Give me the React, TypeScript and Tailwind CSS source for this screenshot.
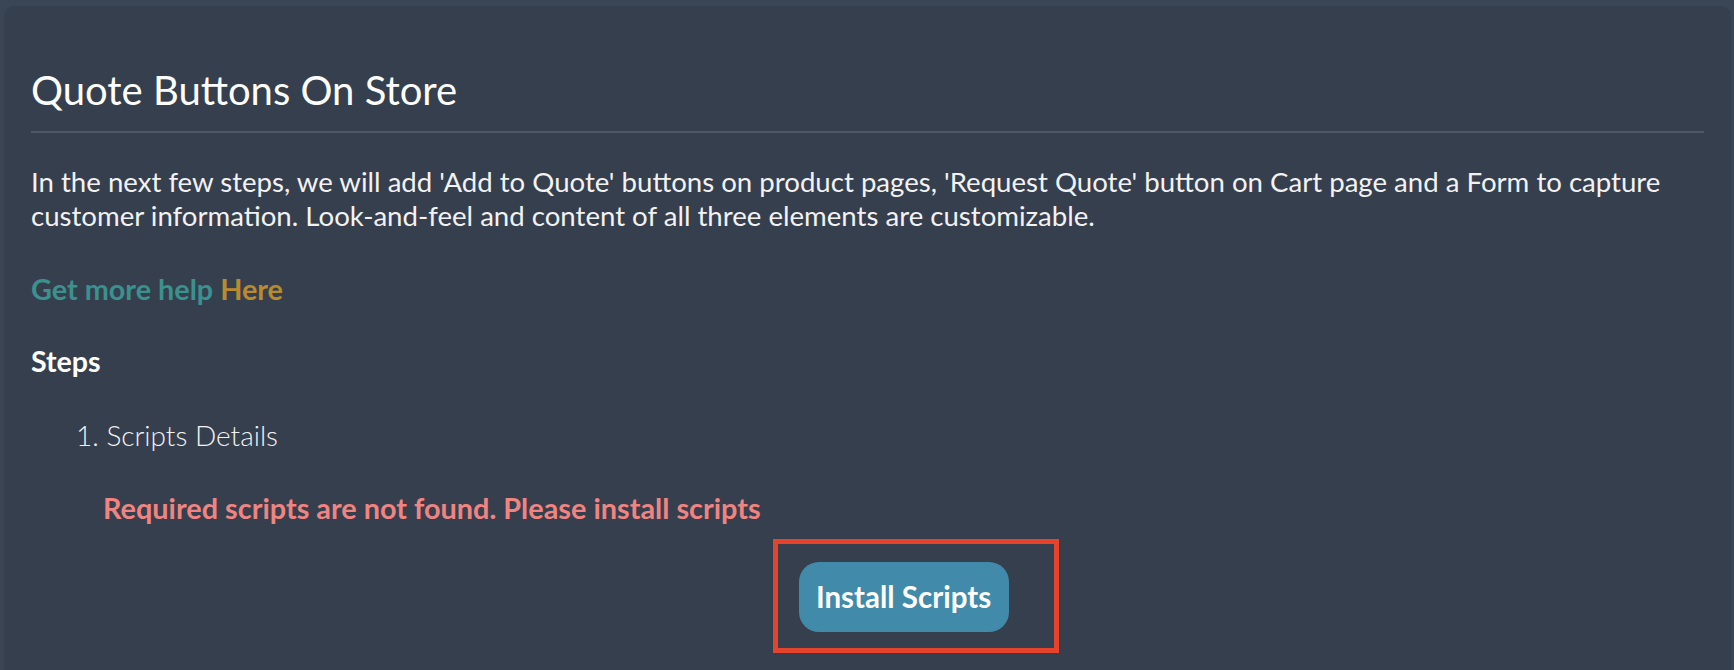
import React from 'react'

const App: React.FC = () => {
  return (
    <div className="h-[670px] overflow-hidden bg-[#3a4556] pt-[6px] pl-[4px] pr-[3px] font-['Lato',sans-serif]">
      <div className="h-[700px] rounded-[10px] bg-[#363f4e] px-[27px] pt-[60px]">
        <h2 className="text-[40px] leading-[48px] text-white">Quote Buttons On Store</h2>
        <div className="mt-[17px] h-[2px] bg-[#4e5868]" />

        <p className="mt-[32px] text-[27.6px] leading-[34px] text-[#f2f2f2]">
          In the next few steps, we will add 'Add to Quote' buttons on product pages, 'Request Quote' button on Cart page and a Form to capture customer information. Look-and-feel and content of all three elements are customizable.
        </p>

        <p className="mt-[39px] text-[28.8px] font-bold leading-[34px]">
          <span className="text-[#3b918d]">Get more help</span>{' '}
          <a className="text-[#b78b2e]">Here</a>
        </p>

        <h4 className="mt-[38px] text-[28.6px] font-bold leading-[34px] text-white">Steps</h4>

        <ol className="mt-[40px] pl-[45px] text-[28px] leading-[34px] text-[#f2f2f2]">
          <li className="font-light">1. Scripts Details</li>
        </ol>

        <div className="pl-[72px]">
          <p className="mt-[39px] text-[28.85px] font-bold leading-[34px] text-[#f08481]">
            Required scripts are not found. Please install scripts
          </p>
          <div className="mt-[37px] flex justify-center">
            <div className="relative">
              <button className="h-[70px] w-[210px] rounded-[20px] bg-[#428aa9] text-[29.5px] font-bold text-white">
                Install Scripts
              </button>
              <div className="pointer-events-none absolute -left-[26px] -top-[23px] -right-[50px] -bottom-[21px] border-[5px] border-[#e5432b]" />
            </div>
          </div>
        </div>
      </div>
    </div>
  )
}

export default App
